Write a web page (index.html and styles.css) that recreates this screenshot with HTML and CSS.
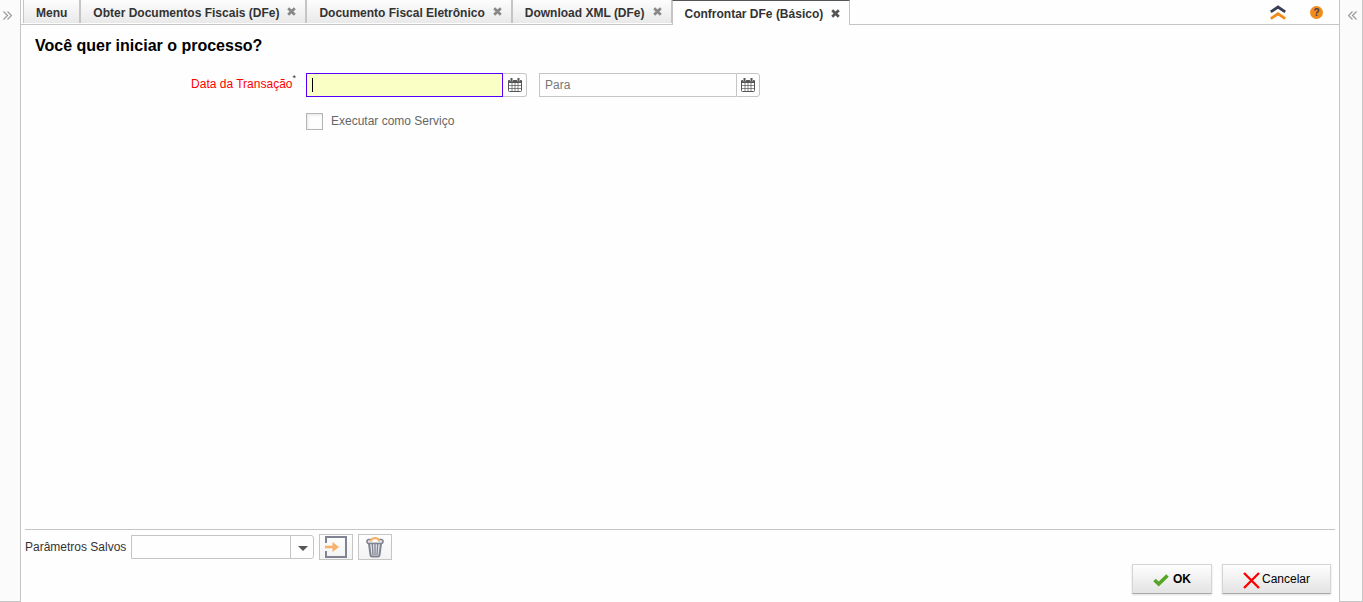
FILE: index.html
```html
<!DOCTYPE html>
<html lang="pt-BR">
<head>
<meta charset="utf-8">
<title>Confrontar DFe (Básico)</title>
<link rel="stylesheet" href="styles.css">
</head>
<body>
<svg class="sprites" aria-hidden="true">
  <symbol id="close" viewBox="0 0 9 9"><path d="M1.200 1.200l6.600 6.600M7.800 1.200L1.200 7.800" stroke="currentColor" stroke-width="2.700"/></symbol>
  <symbol id="calendar" viewBox="0 0 14 14"><path fill="currentColor" d="M1 2h12q1 0 1 1v2H0V3q0-1 1-1z"/><path d="M.5 4.500v8q0 1 1 1h11q1 0 1-1v-8" fill="none" stroke="currentColor"/><path d="M4 5v8M7 5v8M10 5v8M1 7.500h12M1 10.500h12" stroke="currentColor" stroke-width=".7"/><path d="M3.500.8v2.400M10.500.8v2.400" stroke="#fff" stroke-width="3.200"/><path d="M3.500 0v3.500M10.500 0v3.500" stroke="currentColor" stroke-width="2"/></symbol>
</svg>
<div class="app">
  <aside class="side side-left"><button class="side-toggle" type="button" aria-label="Expandir painel esquerdo">
    <svg width="9" height="9" viewBox="0 0 9 9"><path d="M.5.5l4 4-4 4M4.500.5l4 4-4 4"/></svg></button></aside>

  <main class="main">
    <header class="topbar">
      <nav class="tabs">
        <div class="tab"><button class="tab-name" type="button">Menu</button></div>
        <div class="tab closable"><button class="tab-name" type="button">Obter Documentos Fiscais (DFe)</button><button class="tab-close" type="button" aria-label="Fechar"><svg><use href="#close"/></svg></button></div>
        <div class="tab closable"><button class="tab-name" type="button">Documento Fiscal Eletrônico</button><button class="tab-close" type="button" aria-label="Fechar"><svg><use href="#close"/></svg></button></div>
        <div class="tab closable"><button class="tab-name" type="button">Download XML (DFe)</button><button class="tab-close" type="button" aria-label="Fechar"><svg><use href="#close"/></svg></button></div>
        <div class="tab closable active"><button class="tab-name" type="button">Confrontar DFe (Básico)</button><button class="tab-close" type="button" aria-label="Fechar"><svg><use href="#close"/></svg></button></div>
      </nav>
      <div class="tools">
        <button class="tool" type="button" aria-label="Recolher"><svg width="16" height="15" viewBox="0 0 16 15" fill="none" stroke-width="2.800"><path d="M.8 6.800L8 2l7.200 4.800" stroke="#3a3e55"/><path d="M.8 13.600L8 8.800l7.200 4.800" stroke="#f28a1c"/></svg></button>
        <button class="tool help" type="button" aria-label="Ajuda">?</button>
      </div>
    </header>

    <form class="process">
      <section class="content">
        <h1 class="title">Você quer iniciar o processo?</h1>
        <div class="params">
          <label class="label required" for="from">Data da Transação<span class="star">*</span></label>
          <div class="range">
            <div class="date focused">
              <input class="date-input" id="from" type="text">
              <span class="caret"></span>
              <button class="date-button" type="button" aria-label="Escolher data inicial"><svg><use href="#calendar"/></svg></button>
            </div>
            <div class="date">
              <input class="date-input" type="text" placeholder="Para" aria-label="Para">
              <button class="date-button" type="button" aria-label="Escolher data final"><svg><use href="#calendar"/></svg></button>
            </div>
          </div>
          <div class="check">
            <input class="check-box" id="service" type="checkbox">
            <label for="service">Executar como Serviço</label>
          </div>
        </div>
      </section>

      <footer class="footer">
        <div class="saved">
          <label class="saved-label" for="saved">Parâmetros Salvos</label>
          <div class="combo">
            <select class="combo-select" id="saved"><option></option></select>
            <span class="combo-arrow"><svg width="10" height="5" viewBox="0 0 10 5"><path d="M0 0h10L5 5z" fill="#555"/></svg></span>
          </div>
          <button class="icon-button" type="button" aria-label="Salvar parâmetros"><svg width="24" height="24" viewBox="0 0 24 24" fill="none"><path d="M2 8V2h20v20H2v-6" stroke="#808392" stroke-width="2"/><path d="M1 12h9" stroke="#f6b26b" stroke-width="2.600"/><path d="M8.500 7l6.500 5-6.500 5z" fill="#f6b26b"/></svg></button>
          <button class="icon-button" type="button" aria-label="Excluir parâmetros"><svg width="20" height="22" viewBox="0 0 20 22" fill="none"><path d="M4 7.500l1.500 11.500q.2 1.500 1.500 1.500h6q1.300 0 1.500-1.500L16 7.500" fill="#e6e6ea" stroke="#808392" stroke-width="2"/><path d="M7.300 8l.7 11M10 8v11M12.700 8L12 19" stroke="#808392" stroke-width="1.300"/><rect x="2" y="3.500" width="16" height="4" rx="2" fill="#e6e6ea" stroke="#808392" stroke-width="1.600"/><path d="M6 5.500C5.500 1 14.500 1 14 5.500" fill="#fff" stroke="#f6b26b" stroke-width="2.200"/></svg></button>
        </div>
        <div class="actions">
          <button class="action ok" type="button"><svg width="16" height="16" viewBox="0 0 16 16"><path d="M1.500 8l4.200 4L14.500 3.500" fill="none" stroke="#56a526" stroke-width="3.600"/></svg>OK</button>
          <button class="action cancel" type="button"><svg width="17" height="17" viewBox="0 0 17 17"><path d="M1 1l15 15M16 1L1 16" stroke="#f00" stroke-width="2.400"/></svg>Cancelar</button>
        </div>
      </footer>
    </form>
  </main>

  <aside class="side side-right"><button class="side-toggle" type="button" aria-label="Expandir painel direito">
    <svg width="9" height="9" viewBox="0 0 9 9"><path d="M4.500.5l-4 4 4 4M8.500.5l-4 4 4 4"/></svg></button></aside>
</div>
</body>
</html>
```

FILE: styles.css
```css
* { box-sizing: border-box; }
body {
  margin: 0;
  background: #fefefe;
  color: #333;
  font: 12px/16px "Liberation Sans", Arial, sans-serif;
}
button, input, select { font: inherit; color: inherit; margin: 0; }
button { padding: 0; border: 0; background: none; }
svg { display: block; flex: none; }
.sprites { position: absolute; width: 0; height: 0; }

.app { display: flex; min-height: 100vh; }
.side { flex: none; background: #fbfbfb; border: 0 solid #c5c5c5; border-bottom-width: 1px; }
.side-left { width: 21px; border-right-width: 1px; }
.side-right { width: 24px; border-left-width: 1px; border-right-width: 1px; }
.side-toggle { display: block; padding: 11px 3px; }
.side-right .side-toggle { padding: 11px 8px; }
.side-toggle path { fill: none; stroke: #999; stroke-width: 1.2; }

.main { flex: 1; min-width: 0; display: flex; flex-direction: column; }
.topbar {
  display: flex;
  justify-content: space-between;
  height: 25px;
  padding-left: 2px;
  border-bottom: 1px solid #c5c5c5;
}
.tabs { display: flex; }
.tab {
  display: flex;
  align-items: center;
  gap: 8px;
  height: 23px;
  padding: 2px 12px 0;
  border: 0 solid #c5c5c5;
  border-width: 0 1px;
  background: linear-gradient(#fdfdfd, #e9e9e9);
}
.closable { padding-right: 9px; }
.tab-name { font-weight: bold; white-space: nowrap; }
.tab-close { padding-bottom: 2px; }
.tab-close svg { width: 9px; height: 9px; color: #888; }
.active { height: 25px; border-top: 1px solid #555; background: #fefefe; }
.active .tab-close svg { color: #555; }
.tools { display: flex; align-items: center; gap: 24px; padding: 0 16px 0 0; }
.help {
  width: 13px;
  height: 13px;
  border-radius: 50%;
  background: #f28a1c;
  color: #3a3e55;
  font: bold 10px/13px "Liberation Sans", Arial, sans-serif;
}

.process { flex: 1; display: flex; flex-direction: column; }
.content { flex: 1; padding: 11px 14px; }
.title { margin: 0; color: #000; font-size: 16px; line-height: 20px; }
.params {
  display: grid;
  grid-template-columns: 261px 1fr;
  column-gap: 10px;
  row-gap: 16px;
  padding-top: 17px;
}
.label { display: flex; justify-content: flex-end; padding-top: 3px; }
.required { color: #f00; }
.star { color: #333; font-size: 9px; line-height: 8px; margin-top: -2px; }
.range { display: flex; gap: 12px; }
.date { position: relative; display: flex; width: 221px; height: 24px; }
.date-input {
  flex: 1;
  min-width: 0;
  padding: 0 5px;
  border: 1px solid #c5c5c5;
  border-right: 0;
  border-radius: 0;
  background: #fefefe;
  outline: 0;
}
.date-input::placeholder { color: #777; opacity: 1; }
.focused .date-input { background: #faffc5; border: 1px solid #50f; }
.caret { position: absolute; left: 6px; top: 5px; width: 1px; height: 14px; background: #000; }
.date-button {
  display: grid;
  place-items: center;
  width: 24px;
  border: 1px solid #c5c5c5;
  border-radius: 0 3px 3px 0;
  color: #555;
}
.focused .date-button { border-left: 0; }
.date-button svg { width: 14px; height: 14px; }
.check { grid-column: 2; display: flex; gap: 8px; color: #666; }
.check-box {
  appearance: none;
  width: 17px;
  height: 17px;
  border: 1px solid #b5b5b5;
  background: #fefefe;
  box-shadow: inset 1px 1px 3px #e5e5e5;
}

.footer { margin: 0 4px; padding: 4px 4px 8px 0; border-top: 1px solid #c5c5c5; }
.saved { display: flex; align-items: center; }
.saved-label { margin-right: 5px; }
.combo { position: relative; width: 183px; height: 24px; margin-right: 5px; }
.combo-select {
  appearance: none;
  width: 100%;
  height: 100%;
  border: 1px solid #c5c5c5;
  border-radius: 0 3px 3px 0;
  background: #fefefe;
}
.combo-arrow {
  position: absolute;
  inset: 1px 0 1px auto;
  width: 24px;
  display: grid;
  place-items: center;
  padding-top: 2px;
  border-left: 1px solid #c5c5c5;
  pointer-events: none;
}
.icon-button {
  display: grid;
  place-items: center;
  width: 34px;
  height: 26px;
  border: 1px solid #c5c5c5;
  background: linear-gradient(#fefefe, #f3f3f3);
}
.icon-button + .icon-button { margin-left: 5px; }
.actions { display: flex; justify-content: flex-end; gap: 10px; padding-top: 4px; }
.action {
  display: flex;
  align-items: center;
  gap: 4px;
  height: 30px;
  padding: 0 20px;
  border: 1px solid #d5d5d5;
  border-bottom-color: #aaa;
  background: linear-gradient(#fefefe, #e3e3e3);
  box-shadow: 0 1px 2px #ddd;
  color: #000;
}
.ok { font-weight: bold; }
.cancel { gap: 2px; }
.action svg { margin-top: 2px; }
```
